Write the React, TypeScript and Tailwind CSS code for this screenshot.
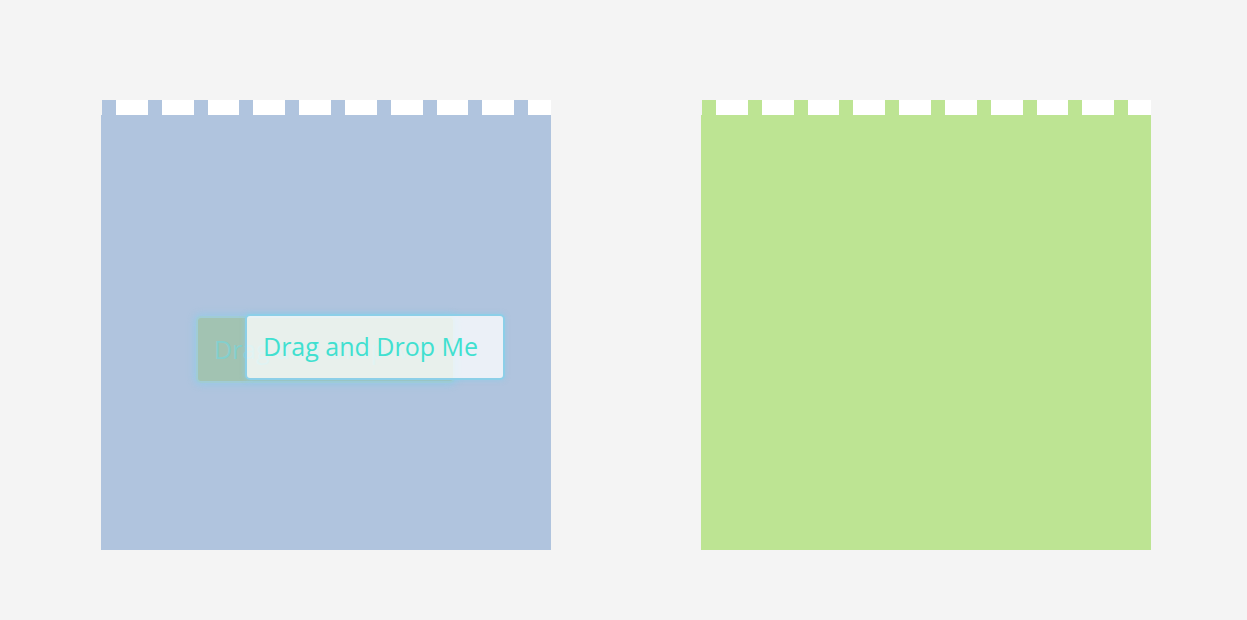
function DropZone({ color, children }: { color: string; children?: React.ReactNode }) {
  return (
    <div className="relative flex h-[450px] w-[450px] shrink-0 flex-col">
      {/* torn / perforated top edge */}
      <div
        className={`ml-px h-[15px] ${
          color === "blue"
            ? "bg-[repeating-linear-gradient(90deg,#b0c4de_0px,#b0c4de_14px,#ffffff_14px,#ffffff_45.8px)]"
            : "bg-[repeating-linear-gradient(90deg,#bde493_0px,#bde493_14px,#ffffff_14px,#ffffff_45.8px)]"
        }`}
      />
      <div className={`flex-1 ${color === "blue" ? "bg-[#b0c4de]" : "bg-[#bde493]"}`} />
      {children}
    </div>
  );
}

export default function App() {
  return (
    <div className="min-h-[620px] w-full bg-[#f4f4f4] pt-[100px] pl-[101px] font-['Open_Sans',sans-serif]">
      <div className="flex gap-[150px]">
        <DropZone color="blue">
          {/* drag ghost */}
          <div className="absolute left-[95px] top-[216px] flex h-[67px] w-[259px] items-center rounded-[5px] border-2 border-[#9fd0e4]/70 bg-[#a2c3b2] px-4 text-[25px] text-[#6fd8e0]/60 shadow-[0_0_7px_2px_rgba(140,205,235,0.65)]">
            Drag and Drop Me
          </div>
          <button
            draggable
            className="absolute left-[144px] top-[214px] flex h-[66px] w-[260px] items-center rounded-[5px] border-2 border-[#8ccfe8] bg-white/75 px-4 text-[25px] text-[#40e0d0] shadow-[0_0_4px_1px_rgba(140,205,235,0.5)]"
          >
            Drag and Drop Me
          </button>
        </DropZone>
        <DropZone color="green" />
      </div>
    </div>
  );
}
